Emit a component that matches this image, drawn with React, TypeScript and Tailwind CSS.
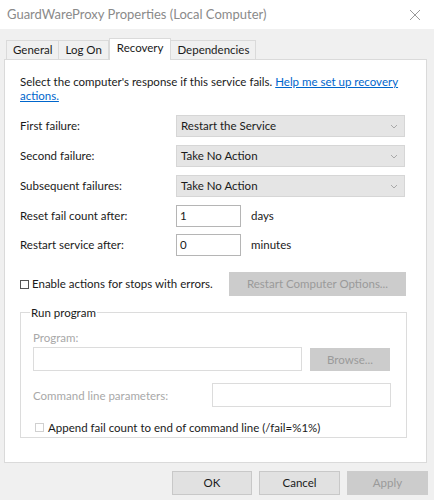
import React from "react";

const rows = [
  { label: "First failure:", value: "Restart the Service" },
  { label: "Second failure:", value: "Take No Action" },
  { label: "Subsequent failures:", value: "Take No Action" },
];

const Chevron = () => (
  <svg width="8" height="5" viewBox="0 0 8 5" className="text-[#a8a8a8]">
    <path d="M1 1l3 3 3-3" fill="none" stroke="currentColor" strokeWidth="1" />
  </svg>
);

const App = () => {
  return (
    <div
      className="w-[434px] h-[500px] bg-[#f0f0f0] text-[11.5px] text-[#1a1a1a] overflow-hidden"
      style={{ fontFamily: "Lato, 'Liberation Sans', Arial, sans-serif" }}
    >
      {/* title bar */}
      <div className="h-[29px] bg-white flex items-center justify-between pl-[7px] pr-[13px]">
        <span className="text-[13px] text-[#8a8a8a]">GuardWareProxy Properties (Local Computer)</span>
        <svg width="12" height="12" viewBox="0 0 12 12" className="text-[#9a9a9a]">
          <path d="M1 1l10 10M11 1L1 11" stroke="currentColor" strokeWidth="1" />
        </svg>
      </div>

      {/* tabs */}
      <div className="flex items-end pl-[6px] h-[30px]">
        <div className="h-[19px] px-[6px] flex items-center border border-b-0 border-[#dadada] bg-[#f0f0f0]">General</div>
        <div className="h-[19px] px-[6px] flex items-center border border-b-0 border-l-0 border-[#dadada] bg-[#f0f0f0]">Log On</div>
        <div className="h-[22px] px-[7px] pb-[3px] flex items-center border border-b-0 border-[#dadada] bg-white relative z-10 -mb-[1px]">Recovery</div>
        <div className="h-[19px] px-[6px] flex items-center border border-b-0 border-l-0 border-[#dadada] bg-[#f0f0f0]">Dependencies</div>
      </div>

      {/* tab panel */}
      <div className="ml-[4px] w-[423px] h-[404px] bg-white border border-[#dadada] pl-[15px] pt-[15px]">
        <p className="leading-[14px] w-[390px]">
          Select the computer's response if this service fails.{" "}
          <span className="text-[#0066cc] underline">
            Help me set up recovery
            <br />
            actions.
          </span>
        </p>

        <div className="mt-[12px] flex flex-col gap-[8px]">
          {rows.map((r) => (
            <div key={r.label} className="flex items-center h-[22px]">
              <span className="w-[156px]">{r.label}</span>
              <div className="w-[229px] h-[22px] bg-[#e5e5e5] border border-[#d6d6d6] flex items-center justify-between pl-[4px] pr-[6px]">
                <span>{r.value}</span>
                <Chevron />
              </div>
            </div>
          ))}
          <div className="flex items-center h-[22px]">
            <span className="w-[156px]">Reset fail count after:</span>
            <div className="w-[65px] h-[22px] border border-[#b5b5b5] flex items-center pl-[3px]">1</div>
            <span className="ml-[10px]">days</span>
          </div>
          <div className="flex items-center h-[22px] -mt-[1px]">
            <span className="w-[156px]">Restart service after:</span>
            <div className="w-[65px] h-[22px] border border-[#b5b5b5] flex items-center pl-[3px]">0</div>
            <span className="ml-[10px]">minutes</span>
          </div>
        </div>

        <div className="mt-[16px] flex items-center justify-between w-[386px] h-[24px]">
          <label className="flex items-center gap-[3px]">
            <span className="w-[9px] h-[9px] border border-[#555] bg-white inline-block" />
            Enable actions for stops with errors.
          </label>
          <div className="w-[177px] h-[24px] bg-[#cccccc] text-[#9a9a9a] flex items-center justify-center">
            Restart Computer Options...
          </div>
        </div>

        {/* group box */}
        <fieldset className="mt-[8px] w-[387px] h-[134px] border border-[#dcdcdc] pl-[12px] pr-[15px]">
          <legend className="px-[1px] ml-[-3px] text-[#1a1a1a]">Run program</legend>
          <div className="text-[#a8a8a8] mt-[10px] leading-[14px]">Program:</div>
          <div className="mt-[2px] flex items-center">
            <div className="w-[269px] h-[24px] border border-[#dcdcdc]" />
            <div className="ml-[8px] w-[80px] h-[23px] bg-[#cccccc] text-[#9a9a9a] flex items-center justify-center">
              Browse...
            </div>
          </div>
          <div className="mt-[12px] flex items-center">
            <span className="w-[179px] text-[#a8a8a8]">Command line parameters:</span>
            <div className="w-[179px] h-[24px] border border-[#dcdcdc]" />
          </div>
          <label className="mt-[12px] flex items-center gap-[4px] text-[#1a1a1a]">
            <span className="w-[9px] h-[9px] ml-[2px] border border-[#d0d0d0] bg-white inline-block" />
            Append fail count to end of command line (/fail=%1%)
          </label>
        </fieldset>
      </div>

      {/* buttons */}
      <div className="flex justify-end gap-[7px] pr-[6px] mt-[8px]">
        <div className="w-[80px] h-[24px] bg-[#e1e1e1] border border-[#c8c8c8] flex items-center justify-center">OK</div>
        <div className="w-[81px] h-[24px] bg-[#e1e1e1] border border-[#c8c8c8] flex items-center justify-center">Cancel</div>
        <div className="w-[81px] h-[24px] bg-[#cccccc] text-[#9a9a9a] flex items-center justify-center">Apply</div>
      </div>
    </div>
  );
};

export default App;
